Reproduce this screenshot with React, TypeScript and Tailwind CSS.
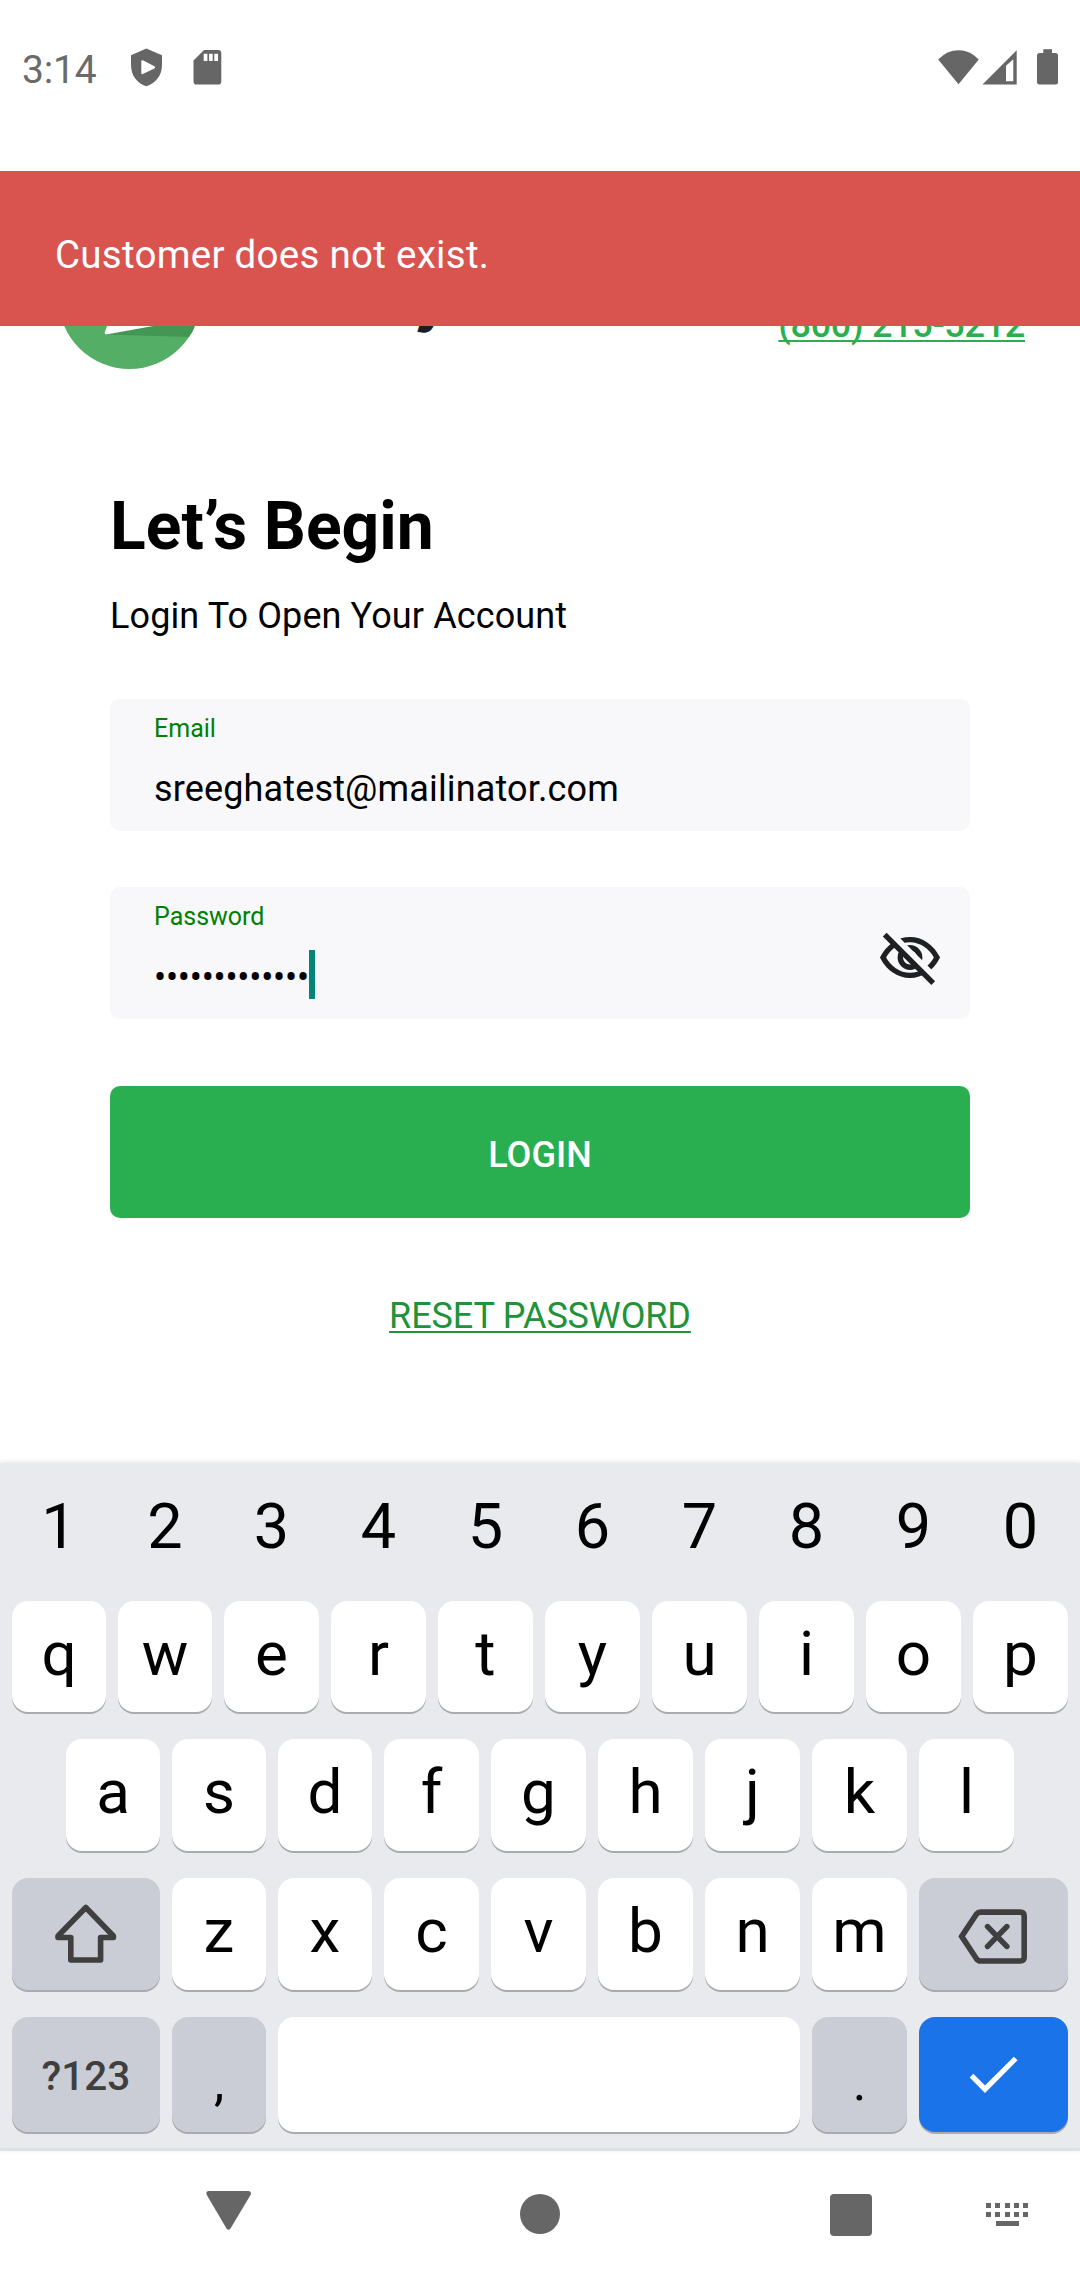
import React from "react";

function StatusBar() {
  return (
    <div className="flex h-[171px] items-start justify-between pt-[46px] pr-[20px] pl-[22px] text-[#666]">
      <div className="flex items-start">
        <span className="w-[107px] text-[39px] leading-[48px] tracking-[-0.2px] text-[#6a6a6a]">3:14</span>
        <svg width="36" height="42" viewBox="129 46 36 42" fill="currentColor">
          <path
            fillRule="evenodd"
            d="M146.3 48.6 162 55.2V65C162 75.500 155.500 83.600 146.300 86.200 137.200 83.600 131 75.500 131 65V55.200ZM141.300 61.200V73.200Q141.300 74.600 142.800 74L154.400 68.500Q156 67.300 154.400 66.200L142.800 60.200Q141.300 59.900 141.300 61.200Z"
          />
        </svg>
        <svg className="ml-[25px]" width="36" height="42" viewBox="190 46 36 42" fill="currentColor">
          <path
            fillRule="evenodd"
            d="M204 50H218.200Q221.300 50 221.300 53V81.500Q221.300 84.600 218.200 84.600H196.600Q193.500 84.600 193.500 81.500V60.500ZM203.700 53.700V61H207.400V53.700ZM209.100 53.700V61H212.700V53.700ZM214.300 53.700V61H218V53.700Z"
          />
        </svg>
      </div>
      <svg width="124" height="42" viewBox="936 46 124 42" fill="currentColor">
        <path d="M958.500 84.300 938.200 59.400Q947 50.200 958.500 50.200T978.800 59.400Z" />
        <path
          fillRule="evenodd"
          d="M982.500 84.500 1016.700 50.300V84.500ZM1006 65.700V81.300H1013.300V59.300Z"
        />
        <rect x="1037" y="53" width="21" height="31.500" rx="2.500" />
        <rect x="1043.300" y="49.200" width="8.700" height="5" />
      </svg>
    </div>
  );
}

function Header() {
  return (
    <div className="flex h-[198px] items-start justify-between pt-[56px] pr-[55px] pl-[58px]">
      <div className="flex items-start">
        <svg width="144" height="144" viewBox="58 227 144 144">
          <circle cx="129.500" cy="298" r="71" fill="#54ae66" />
          <path d="M104 334.500 155 325 196 318Q196 328 189 337Z" fill="#439653" />
          <path d="M107.500 325 104.600 332.500Q104.600 335 107.500 334.300L156 325.500 170 280Z" fill="#fff" />
        </svg>
        <span className="ml-[213px] pt-[51px] font-['Inter'] text-[46px] leading-[56px] font-black text-[#1d1d26]">
          y
        </span>
      </div>
      <a className="mt-[77px] text-[36px] leading-[42px] font-medium tracking-[-0.3px] whitespace-nowrap text-[#29af50] underline decoration-2 underline-offset-[3px] [text-decoration-skip-ink:none]">
        (800) 215-5212
      </a>
    </div>
  );
}

function Toast() {
  return (
    <div className="absolute inset-x-0 top-0 h-[155px] bg-[#d9534f] pt-[61px] pl-[55px] text-[38.5px] leading-[46px] tracking-[0.28px] text-white">
      Customer does not exist.
    </div>
  );
}

function EyeOff() {
  return (
    <svg className="mt-[43px] mr-[28px]" width="64" height="58" viewBox="878 930 64 58" fill="none">
      <g stroke="#1f2023" strokeWidth="5.400">
        <path d="M883 957.500C888.500 947 898.500 939.600 910 939.600S931.500 947 937 957.500C931.500 968 921.500 975.400 910 975.400S888.500 968 883 957.500Z" />
        <circle cx="910" cy="957.500" r="9.700" />
      </g>
      <path d="M884 926.500 941.500 984" stroke="#f8f8fb" strokeWidth="6.200" />
      <path d="M884.700 934.700 933.200 983.200" stroke="#1f2023" strokeWidth="5.400" />
    </svg>
  );
}

function LoginForm() {
  return (
    <form className="flex flex-col px-[110px]">
      <h1 className="mt-[118px] text-[66px] leading-[80px] font-bold tracking-[0.05px] text-black">Let’s Begin</h1>
      <p className="mt-[28px] text-[36px] leading-[42px] tracking-[0.11px] text-black">Login To Open Your Account</p>
      <div className="mt-[62px] h-[132px] rounded-[10px] bg-[#f8f8fb] pl-[44px]">
        <div className="mt-[15px] text-[25px] leading-[30px] text-[#008000]">Email</div>
        <div className="mt-[23px] text-[36px] leading-[44px] tracking-[0.15px] text-black">sreeghatest@mailinator.com</div>
      </div>
      <div className="mt-[56px] flex h-[132px] items-start justify-between rounded-[10px] bg-[#f8f8fb] pl-[44px]">
        <div>
          <div className="mt-[15px] text-[25px] leading-[30px] text-[#008000]">Password</div>
          <div className="mt-[18px] flex h-[49px] items-start">
            <span className="text-[36px] leading-[56px] tracking-[-0.24px] text-black">•••••••••••••</span>
            <span className="h-[49px] w-[6px] bg-[#008577]" />
          </div>
        </div>
        <EyeOff />
      </div>
      <div className="mt-[67px] flex h-[132px] justify-center rounded-[10px] bg-[#29af50] pt-[48px] text-[36px] leading-[42px] font-medium text-white">
        LOGIN
      </div>
      <a className="mt-[77px] self-center text-[36px] leading-[42px] tracking-[-0.13px] text-[#20933a] underline decoration-2 underline-offset-[3px] [text-decoration-skip-ink:none]">
        RESET PASSWORD
      </a>
    </form>
  );
}

type KeyProps = { children?: React.ReactNode; className?: string };

function Key({ children, className = "bg-white" }: KeyProps) {
  return (
    <div className={`flex h-full min-w-0 justify-center rounded-[16px] shadow-[0_2px_0_#a9abae] ${className}`}>
      {children}
    </div>
  );
}

function Letters({ keys }: { keys: string }) {
  return (
    <>
      {keys.split("").map((k) => (
        <Key key={k} className="bg-white pt-[17px]">
          <span className="text-[62px] leading-[72px] text-black">{k}</span>
        </Key>
      ))}
    </>
  );
}

function Keyboard() {
  return (
    <div className="relative h-[688px] border-b-[3px] border-[#e0e0e1] bg-[#e8eaed] px-[12px] shadow-[0_-1px_5px_rgba(0,0,0,0.1)]">
      <div className="grid h-[138px] grid-cols-[94px_94px_repeat(8,95px)] gap-[12px] pt-[27px]">
        {"1234567890".split("").map((d) => (
          <span key={d} className="text-center text-[63px] leading-[74px] text-black">
            {d}
          </span>
        ))}
      </div>
      <div className="grid h-[111px] grid-cols-[94px_94px_repeat(8,95px)] gap-[12px]">
        <Letters keys="qwertyuiop" />
      </div>
      <div className="mt-[27px] grid h-[112px] grid-cols-[94px_94px_94px_repeat(6,95px)] gap-[12px] pl-[54px]">
        <Letters keys="asdfghjkl" />
      </div>
      <div className="mt-[27px] grid h-[112px] grid-cols-[148px_94px_94px_repeat(5,95px)_149px] gap-[12px]">
        <Key className="bg-[#cbcdd6] pt-[22px]">
          <svg width="68" height="68" viewBox="52 1900 68 68" fill="none" stroke="#3f3f40" strokeWidth="5.600" strokeLinejoin="round">
            <path d="M85.800 1907.500 58 1936V1937.500H70.800V1960H100.600V1937.500H113.400V1936Z" />
          </svg>
        </Key>
        <Letters keys="zxcvbnm" />
        <Key className="bg-[#cbcdd6] pt-[26px]">
          <svg width="74" height="64" viewBox="957 1904 74 64" fill="none" stroke="#3f3f40" strokeWidth="5.600">
            <path d="M961.700 1936.400 976.600 1914Q978.100 1912.100 980.500 1912.100H1020Q1024.200 1912.100 1024.200 1916V1957Q1024.200 1961 1020 1961H980.500Q978.100 1961 976.600 1959Z" />
            <path d="M987.600 1926.600 1006.800 1946.400M1006.800 1926.600 987.600 1946.400" strokeLinecap="round" />
          </svg>
        </Key>
      </div>
      <div className="mt-[27px] grid h-[115px] grid-cols-[148px_94px_522px_95px_149px] gap-[12px]">
        <Key className="bg-[#cbcdd6] pt-[34px]">
          <span className="text-[40.500px] leading-[50px] font-medium text-[#3f3f40]">?123</span>
        </Key>
        <Key className="bg-[#cbcdd6] pt-[36px]">
          <span className="text-[52px] leading-[60px] text-black">,</span>
        </Key>
        <Key />
        <Key className="bg-[#cbcdd6] pt-[36px]">
          <span className="text-[52px] leading-[60px] text-black">.</span>
        </Key>
        <Key className="bg-[#1a73e8] pt-[35px]">
          <svg width="56" height="46" viewBox="966 2052 56 46" fill="none" stroke="#fff" strokeWidth="5.200">
            <path d="M971.500 2075.700 985 2089.200 1015.700 2058.500" />
          </svg>
        </Key>
      </div>
    </div>
  );
}

function NavBar() {
  return (
    <div className="flex h-[129px] items-start bg-white pt-[37px] pl-[204px] text-[#666]">
      <svg width="50" height="50" viewBox="204 2188 50 50" fill="currentColor">
        <path d="M208.500 2191H248.500Q252 2191.500 250.500 2195L230.500 2228.500Q228.500 2231 226.500 2228.500L206.800 2195Q205.300 2191.500 208.500 2191Z" />
      </svg>
      <div className="mt-[5.500px] ml-[266px] size-[40px] rounded-full bg-[#666]" />
      <div className="mt-[6px] ml-[270px] size-[41.500px] rounded-[4px] bg-[#666]" />
      <div className="mt-[15px] ml-[114.500px] flex w-[42px] flex-col items-center">
        {[0, 1].map((row) => (
          <div key={row} className="mb-[4px] flex w-full justify-between">
            {[0, 1, 2, 3, 4].map((dot) => (
              <span key={dot} className="size-[5px] bg-[#666]" />
            ))}
          </div>
        ))}
        <span className="h-[5px] w-[23px] bg-[#666]" />
      </div>
    </div>
  );
}

export default function App() {
  return (
    <div className="flex h-[2280px] w-[1080px] flex-col overflow-hidden bg-white font-['Roboto',sans-serif]">
      <StatusBar />
      <main className="relative h-[1292px]">
        <Header />
        <LoginForm />
        <Toast />
      </main>
      <Keyboard />
      <NavBar />
    </div>
  );
}
